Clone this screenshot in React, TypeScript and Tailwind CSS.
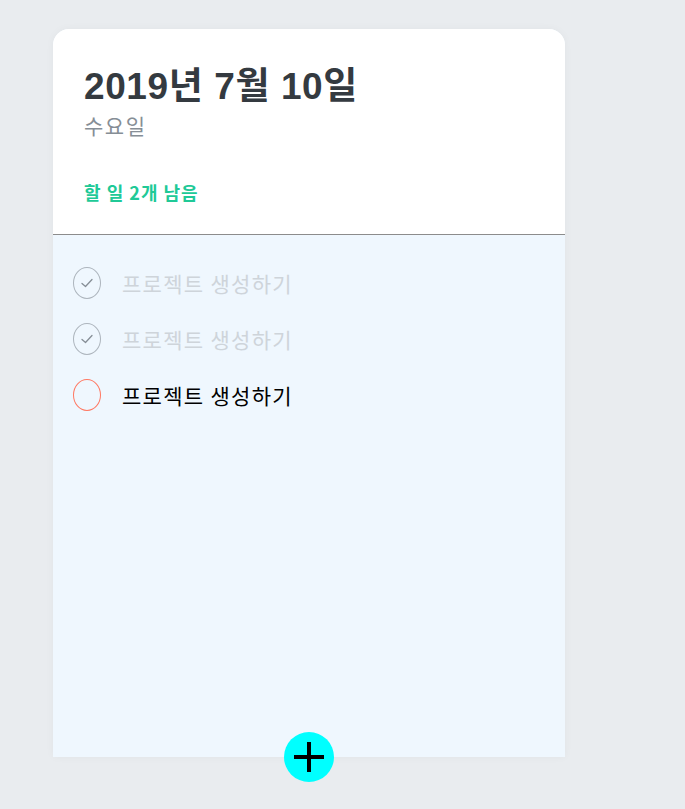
import React from 'react'

const todos = [
  { id: 1, text: '프로젝트 생성하기', done: true },
  { id: 2, text: '프로젝트 생성하기', done: true },
  { id: 3, text: '프로젝트 생성하기', done: false },
]

const CheckMark = () => (
  <svg width="12" height="10" viewBox="0 0 12 10" fill="none">
    <path d="M1 5.5 L4.5 8.5 L11 1.5" stroke="#868e96" strokeWidth="1.3" strokeLinecap="round" strokeLinejoin="round" />
  </svg>
)

const TodoItem = ({ text, done }: { text: string; done: boolean }) => (
  <div className="flex flex-row items-center py-3">
    <div
      className={`w-[28px] h-[32px] shrink-0 rounded-[50%] border flex items-center justify-center mr-[21px] ${
        done ? 'border-[#adb5bd]' : 'border-[#ff7862]'
      }`}
    >
      {done && <CheckMark />}
    </div>
    <div className={`text-[21px] leading-[32px] tracking-[1.3px] ${done ? 'text-[#ced4da]' : 'text-black'}`}>{text}</div>
  </div>
)

export default function App() {
  return (
    <div
      className="min-h-screen w-full bg-[#e9ecef] pt-[29px] pl-[53px]"
      style={{ fontFamily: '"Noto Sans CJK KR", "Noto Sans", sans-serif' }}
    >
      <div className="relative w-[512px] h-[728px] rounded-t-[16px] bg-[#eff7fe] shadow-[0_0_8px_rgba(0,0,0,0.04)] flex flex-col">
        <div className="bg-white rounded-t-[16px] pt-[36px] px-[31px] pb-[29px] border-b border-[#8c8c8c]">
          <h1
            className="text-[37px] leading-[44px] font-bold tracking-[0.6px] text-[#343a40]"
            style={{ fontFamily: '"Liberation Sans", "Noto Sans CJK KR", sans-serif' }}
          >
            2019년 7월 10일
          </h1>
          <div className="mt-[2px] text-[21px] leading-[28px] tracking-[1.5px] text-[#868e96]">수요일</div>
          <div className="mt-10 text-[18px] leading-[26px] font-bold tracking-[1px] text-[#20c997]">할 일 2개 남음</div>
        </div>

        <div className="flex-1 pt-5 px-5">
          {todos.map((todo) => (
            <TodoItem key={todo.id} text={todo.text} done={todo.done} />
          ))}
        </div>

        <button className="absolute left-1/2 bottom-0 -translate-x-1/2 translate-y-1/2 w-[50px] h-[50px] rounded-full bg-[#00ffff] flex items-center justify-center">
          <svg width="30" height="30" viewBox="0 0 30 30">
            <path d="M15 0 V30 M0 15 H30" stroke="#000" strokeWidth="4" />
          </svg>
        </button>
      </div>
    </div>
  )
}
